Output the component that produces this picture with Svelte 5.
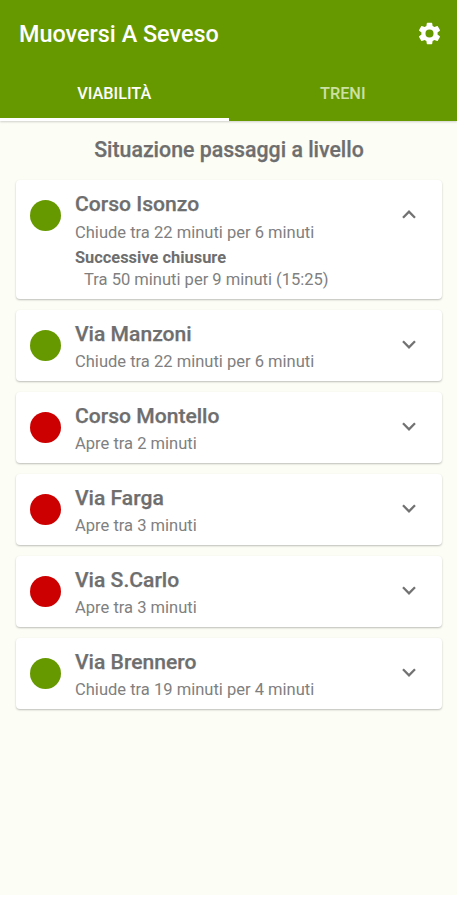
<script>
  const crossings = [
    { name: 'Corso Isonzo', status: 'Chiude tra 22 minuti per 6 minuti', open: true, next: ['Tra 50 minuti per 9 minuti (15:25)'] },
    { name: 'Via Manzoni', status: 'Chiude tra 22 minuti per 6 minuti', open: true },
    { name: 'Corso Montello', status: 'Apre tra 2 minuti', open: false },
    { name: 'Via Farga', status: 'Apre tra 3 minuti', open: false },
    { name: 'Via S.Carlo', status: 'Apre tra 3 minuti', open: false },
    { name: 'Via Brennero', status: 'Chiude tra 19 minuti per 4 minuti', open: true }
  ];
  let expanded = $state(0);
  let tab = $state(0);
</script>

<div class="screen">
  <header>
    <div class="bar">
      <h1>Muoversi A Seveso</h1>
      <button class="settings" aria-label="Impostazioni">
        <svg viewBox="0 0 24 24" width="27" height="27"><path fill="#fff" d="M19.14 12.94c.04-.3.06-.61.06-.94s-.02-.64-.07-.94l2.03-1.58a.49.49 0 0 0 .12-.61l-1.92-3.32a.49.49 0 0 0-.59-.22l-2.39.96c-.5-.38-1.03-.7-1.62-.94l-.36-2.54A.48.48 0 0 0 13.92 2.4h-3.84a.47.47 0 0 0-.47.41l-.36 2.54c-.59.24-1.13.57-1.62.94l-2.39-.96a.48.48 0 0 0-.59.22L2.74 8.87a.47.47 0 0 0 .12.61l2.03 1.58c-.05.3-.09.63-.09.94s.02.64.07.94l-2.03 1.58a.49.49 0 0 0-.12.61l1.92 3.32c.12.22.37.29.59.22l2.39-.96c.5.38 1.03.7 1.62.94l.36 2.54c.05.24.24.41.48.41h3.84c.24 0 .44-.17.47-.41l.36-2.54c.59-.24 1.13-.56 1.62-.94l2.39.96c.22.08.47 0 .59-.22l1.92-3.32a.47.47 0 0 0-.12-.61zM12 15.6A3.6 3.6 0 1 1 12 8.4a3.6 3.6 0 0 1 0 7.2z" /></svg>
      </button>
    </div>
    <nav>
      {#each ['VIABILITÀ', 'TRENI'] as label, i}
        <button class:active={tab === i} onclick={() => (tab = i)}>{label}</button>
      {/each}
    </nav>
  </header>

  <main>
    <h2>Situazione passaggi a livello</h2>
    {#each crossings as c, i}
      <article class:expanded={expanded === i && c.next}>
        <span class="light" class:green={c.open}></span>
        <div class="info">
          <h3>{c.name}</h3>
          <p>{c.status}</p>
          {#if expanded === i && c.next}
            <h4>Successive chiusure</h4>
            {#each c.next as n}<p class="next">{n}</p>{/each}
          {/if}
        </div>
        <button class="toggle" aria-label="Dettagli" onclick={() => (expanded = expanded === i ? -1 : i)}>
          <svg viewBox="0 0 14 9" width="14" height="9"><path d={expanded === i ? 'M1 7.7L7 1.7L13 7.7' : 'M1 1.3L7 7.3L13 1.3'} fill="none" stroke="#727272" stroke-width="2.3" /></svg>
        </button>
      </article>
    {/each}
  </main>
</div>

<style>
  .screen {
    width: 457px;
    height: 900px;
    display: flex;
    flex-direction: column;
    font-family: Roboto, "Liberation Sans", sans-serif;
    color: #6e6e6e;
    background: #fff;
    overflow: hidden;
  }
  h1, h2, h3, h4, p { margin: 0; font-weight: 500; white-space: nowrap; }
  button { border: 0; padding: 0; background: none; font: inherit; color: inherit; }
  svg { display: block; }
  header {
    height: 121px;
    flex: none;
    background: #669900;
    box-shadow: 0 1px 2px rgba(0, 0, 0, 0.18);
    z-index: 1;
  }
  .bar {
    height: 67px;
    box-sizing: border-box;
    display: flex;
    align-items: center;
    justify-content: space-between;
    padding: 0 14px 0 19px;
  }
  h1 { color: #fff; font-size: 23.4px; line-height: 28px; }
  nav { display: flex; height: 54px; }
  nav button {
    flex: 1;
    font-size: 16.3px;
    font-weight: 500;
    line-height: 19px;
    padding-top: 2px;
    color: #cce0a3;
    border-bottom: 3px solid transparent;
  }
  nav button.active { color: #fff; border-color: #fff; }
  main { background: #fcfdf5; height: 774px; padding: 0 15px 0 16px; box-sizing: border-box; }
  h2 { height: 59px; line-height: 58px; text-align: center; font-size: 21.3px; -webkit-text-stroke: 0.25px #6e6e6e; }
  article {
    display: flex;
    align-items: flex-start;
    height: 71px;
    margin-bottom: 11px;
    padding: 0 26px 0 14px;
    box-sizing: border-box;
    background: #fff;
    border-radius: 4px;
    box-shadow: 0 1px 2px rgba(0, 0, 0, 0.25);
  }
  article.expanded { height: 119px; }
  .light { width: 31px; height: 31px; border-radius: 50%; background: #cc0000; margin: 20px 14px 0 0; }
  .light.green { background: #669900; }
  .info { flex: 1; padding-top: 11px; }
  h3 { font-size: 21.1px; line-height: 26px; -webkit-text-stroke: 0.25px #6e6e6e; }
  p { font-size: 16.55px; line-height: 22px; padding-top: 4px; font-weight: 400; color: #808080; }
  .expanded h3 + p { padding-top: 5px; }
  h4 { font-size: 16.4px; line-height: 22px; padding-top: 3px; font-weight: 700; }
  .next { padding: 0 0 0 9px; }
  .toggle { margin-top: 30px; }
</style>
